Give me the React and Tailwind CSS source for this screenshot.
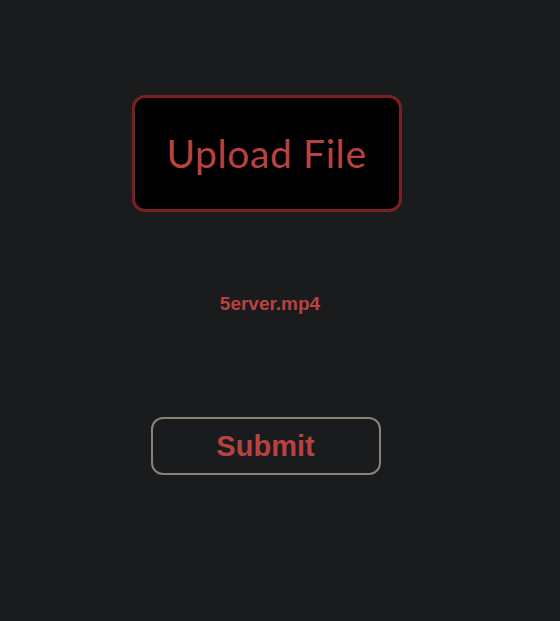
export default function App() {
  return (
    <div className="min-h-[621px] w-full bg-[#1a1b1d]">
      <div className="flex w-[533px] flex-col items-center pt-[95px]">
        <button className="flex h-[117px] w-[270px] items-center justify-center rounded-[13px] border-[3px] border-[#7a2022] bg-black">
          <span className="text-[39px] leading-none tracking-[0.6px] text-[#b84242]" style={{ fontFamily: "Lato, 'Noto Sans', sans-serif" }}>
            Upload File
          </span>
        </button>
        <div className="mt-[82px] pl-[7px] text-[19px] font-semibold leading-none text-[#b84242]" style={{ fontFamily: "'Liberation Sans', Arial, sans-serif" }}>
          5erver.mp4
        </div>
        <button className="mt-[104px] mr-[2px] flex h-[58px] w-[230px] items-center justify-center rounded-[12px] border-2 border-[#8a8276] bg-transparent">
          <span className="text-[29px] font-bold leading-none text-[#b84242]" style={{ fontFamily: "'Liberation Sans', Arial, sans-serif" }}>
            Submit
          </span>
        </button>
      </div>
    </div>
  );
}
